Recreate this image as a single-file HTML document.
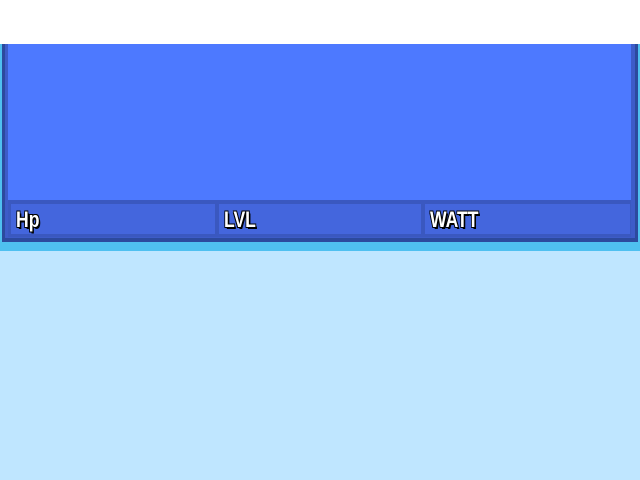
<html><head><style>
body{margin:0;width:640px;height:480px;background:#bfe6ff;position:relative;overflow:hidden;font-family:"Liberation Sans",sans-serif}
div{position:absolute}
.c{background:#4466dd;top:204px;height:30px;box-sizing:border-box}
.c span{position:absolute;left:5px;top:3px;font-weight:bold;color:#fff;font-size:22px;line-height:26px;transform:scaleX(0.8);transform-origin:left;text-shadow:1px 1px 0 #000,-1px -1px 0 #000,1px -1px 0 #000,-1px 1px 0 #000,2px 2px 0 #000}
</style></head><body>
<div style="left:0;top:0;width:640px;height:44px;background:#fff"></div>
<div style="left:0;top:44px;width:640px;height:207px;background:#4fc0f0"></div>
<div style="left:2px;top:44px;width:636px;height:198px;background:#2c4a9e"></div>
<div style="left:5px;top:44px;width:630px;height:194px;background:#3d5cc8"></div>
<div style="left:8px;top:44px;width:623px;height:156px;background:#4d79ff"></div>
<div style="left:8px;top:200px;width:623px;height:37px;background:#3a58c0"></div>
<div class="c" style="left:11px;width:204px"><span>Hp</span></div>
<div class="c" style="left:219px;width:202px"><span>LVL</span></div>
<div class="c" style="left:425px;width:205px"><span>WATT</span></div>
</body></html>
